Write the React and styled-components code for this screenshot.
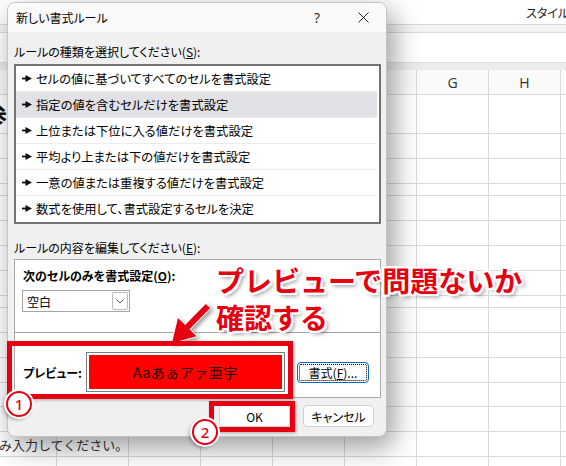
import React from "react";
import styled, { createGlobalStyle } from "styled-components";

const GlobalStyle = createGlobalStyle`
  html, body { margin: 0; padding: 0; background: #fff; }
  body { font-family: "Noto Sans CJK JP", "Noto Sans", sans-serif; }
`;

const Screen = styled.div`
  position: relative;
  width: 566px;
  height: 466px;
  overflow: hidden;
  background: #fff;
  font-family: "Noto Sans CJK JP", "Noto Sans", sans-serif;
  font-feature-settings: "palt";
  color: #000;
`;

/* ---------- spreadsheet behind ---------- */

const Sheet = styled.div`
  display: flex;
  flex-direction: column;
  width: 100%;
  height: 100%;
  & > * {
    flex-shrink: 0;
  }
`;

const Ribbon = styled.div`
  height: 24px;
  border-bottom: 1px solid #d8d8d8;
  display: flex;
  align-items: center;
  padding-left: 444px;
  font-size: 12px;
`;

const RibbonDivider = styled.div`
  width: 1px;
  height: 22px;
  background: #dcdcdc;
  margin-left: 4px;
  align-self: flex-start;
`;

const RibbonLabel = styled.span`
  margin-left: 78px;
  white-space: nowrap;
  color: #222;
`;

const RibbonFoot = styled.div`
  height: 7px;
  background: #f4f4f4;
  border-bottom: 1px solid #dadada;
`;

const FormulaBar = styled.div`
  height: 29px;
  background: #fff;
`;

const HeaderGap = styled.div`
  height: 8px;
  background: #ececec;
  border-top: 1px solid #dedede;
  box-sizing: border-box;
`;

const Row = styled.div`
  display: grid;
  grid-template-columns: 57px repeat(8, 72px);
  height: ${(p) => p.h}px;
  background: ${(p) => (p.header ? "#fafafa" : "#fff")};
`;

const Cell = styled.div`
  border-right: 1px solid #dadada;
  border-bottom: 1px solid #dadada;
  display: flex;
  align-items: center;
  justify-content: ${(p) => (p.center ? "center" : "flex-start")};
  font-family: "Open Sans", "Noto Sans", sans-serif;
  font-size: 14px;
  color: #333;
  white-space: nowrap;
  overflow: visible;
  min-width: 0;
`;

const SpillText = styled.span`
  margin-left: ${(p) => p.shift}px;
  font-family: "Noto Sans CJK JP", sans-serif;
  font-feature-settings: normal;
  font-size: ${(p) => p.size || 13}px;
  font-weight: ${(p) => (p.bold ? 700 : 400)};
  color: ${(p) => p.color || "#333"};
`;

/* ---------- dialog ---------- */

const Dialog = styled.div`
  position: absolute;
  left: 7px;
  top: 2px;
  width: 380px;
  height: 435px;
  box-sizing: border-box;
  border: 1px solid #c4c4c4;
  border-radius: 8px;
  overflow: hidden;
  display: flex;
  flex-direction: column;
  background: #f0f0f0;
  box-shadow: 6px 10px 28px rgba(0, 0, 0, 0.4);
  font-size: 12px;
`;

const TitleBar = styled.div`
  height: 29px;
  background: #fafafa;
  display: flex;
  align-items: center;
  padding-left: 8px;
`;

const Title = styled.span`
  flex: 1;
  font-size: 12px;
`;

const TitleButton = styled.div`
  width: 46px;
  height: 29px;
  display: flex;
  align-items: center;
  justify-content: center;
  font-family: "Open Sans", sans-serif;
  font-size: 14px;
  color: #222;
`;

const Body = styled.div`
  flex: 1;
  display: flex;
  flex-direction: column;
  padding: 12px 5px 0 6px;
`;

const Label = styled.div`
  font-size: 12px;
  line-height: 16px;
  height: 16px;
  margin-top: ${(p) => p.mt || 0}px;
  margin-bottom: ${(p) => p.mb || 0}px;
  font-weight: ${(p) => (p.bold ? 700 : 400)};
  white-space: nowrap;
`;

const Key = styled.span`
  text-decoration: underline;
`;

const ListBox = styled.div`
  height: 160px;
  box-sizing: border-box;
  border: 2px solid #737373;
  background: #fff;
  display: flex;
  flex-direction: column;
`;

const ListItem = styled.div`
  height: 26px;
  flex-shrink: 0;
  box-sizing: border-box;
  display: flex;
  align-items: center;
  padding-left: 6px;
  margin-right: 2px;
  font-size: 12.3px;
  background: ${(p) => (p.selected ? "#e1e1e6" : "#fff")};
  border-bottom: 1px solid ${(p) => (p.last ? "transparent" : "#ececec")};
  white-space: nowrap;
`;

const Bullet = styled.svg`
  width: 10px;
  height: 7px;
  margin-right: 4px;
  flex-shrink: 0;
`;

const EditPanel = styled.div`
  height: 139px;
  box-sizing: border-box;
  border: 1px solid #a9a9a9;
  background: #fff;
  display: flex;
  flex-direction: column;
`;

const PanelTop = styled.div`
  height: 72px;
  box-sizing: border-box;
  padding: 8px 8px 0;
`;

const Combo = styled.div`
  width: 108px;
  height: 22px;
  box-sizing: border-box;
  border: 1px solid #a5a5a5;
  margin-top: 6px;
  margin-left: -1px;
  display: flex;
  align-items: center;
  padding: 0 1px 0 4px;
  font-size: 12px;
`;

const ComboText = styled.span`
  flex: 1;
`;

const ComboButton = styled.div`
  width: 16px;
  height: 18px;
  box-sizing: border-box;
  border: 1px solid #bdbdbd;
  border-radius: 2px;
  display: flex;
  align-items: center;
  justify-content: center;
`;

const Divider = styled.div`
  height: 1px;
  background: #a3a3a3;
`;

const PreviewRow = styled.div`
  height: 40px;
  margin-top: 19px;
  display: flex;
  align-items: center;
  padding-left: 8px;
`;

const PreviewLabel = styled.span`
  width: 63px;
  font-size: 12px;
  font-weight: 700;
`;

const PreviewBox = styled.div`
  width: 199px;
  height: 40px;
  box-sizing: border-box;
  border: 1px solid #7c7c7c;
  padding: 2px;
  background: #fff;
`;

const PreviewFill = styled.div`
  width: 100%;
  height: 100%;
  background: #ff0000;
  display: flex;
  align-items: center;
  justify-content: center;
  font-size: 14px;
  letter-spacing: 0.5px;
  font-feature-settings: normal;
  color: #2a0000;
`;

const Button = styled.div`
  width: ${(p) => p.w}px;
  height: ${(p) => p.h || 22}px;
  margin-left: ${(p) => p.ml || 0}px;
  box-sizing: border-box;
  background: #fdfdfd;
  border: 1px solid ${(p) => (p.focused ? "#0a67c2" : "#d2d2d2")};
  border-radius: 4px;
  display: flex;
  align-items: center;
  justify-content: center;
  font-size: 12px;
  outline: ${(p) => (p.focused ? "1px dotted #000" : "none")};
  outline-offset: -3px;
`;

const ButtonRow = styled.div`
  display: flex;
  justify-content: flex-end;
  gap: 13px;
  margin-top: 7px;
  padding-right: 7px;
`;

/* ---------- annotations ---------- */

const Callout = styled.div`
  position: absolute;
  left: 216px;
  top: 262px;
  font-size: 28px;
  line-height: 37px;
  font-weight: 700;
  font-feature-settings: normal;
  color: #e60012;
  white-space: nowrap;
  text-shadow: 2px 0 0 #fff, -2px 0 0 #fff, 0 2px 0 #fff, 0 -2px 0 #fff,
    2px 2px 0 #fff, -2px 2px 0 #fff, 2px -2px 0 #fff, -2px -2px 0 #fff,
    3px 3px 4px rgba(0, 0, 0, 0.45);
`;

const RedFrame = styled.div`
  position: absolute;
  left: ${(p) => p.x}px;
  top: ${(p) => p.y}px;
  width: ${(p) => p.w}px;
  height: ${(p) => p.h}px;
  box-sizing: border-box;
  border: 5px solid #e60012;
  box-shadow: 1px 1px 3px rgba(0, 0, 0, 0.3);
`;

const Badge = styled.div`
  position: absolute;
  left: ${(p) => p.x}px;
  top: ${(p) => p.y}px;
  width: 26px;
  height: 26px;
  box-sizing: border-box;
  border-radius: 50%;
  background: #fff;
  border: 2px solid #e60012;
  box-shadow: 0 0 0 2px #fff, -2px 2px 4px rgba(0, 0, 0, 0.45);
  display: flex;
  align-items: center;
  justify-content: center;
  font-family: "Noto Sans", sans-serif;
  font-size: 15px;
  font-weight: 500;
  color: #e60012;
`;

const ArrowSvg = styled.svg`
  position: absolute;
  left: 160px;
  top: 296px;
  width: 60px;
  height: 60px;
  overflow: visible;
  filter: drop-shadow(2px 2px 2px rgba(0, 0, 0, 0.4));
`;

const items = [
  "セルの値に基づいてすべてのセルを書式設定",
  "指定の値を含むセルだけを書式設定",
  "上位または下位に入る値だけを書式設定",
  "平均より上または下の値だけを書式設定",
  "一意の値または重複する値だけを書式設定",
  "数式を使用して、書式設定するセルを決定",
];

const rowHeights = [39, 25, 25, 12, 25, 25, 25, 25, 12, 25, 25, 25, 24, 25, 25, 25];
const cols = ["A", "B", "C", "D", "E", "F", "G", "H", "I"];

export default function App() {
  return (
    <Screen>
      <GlobalStyle />
      <Sheet>
        <Ribbon>
          <svg width="8" height="8" viewBox="0 0 8 8">
            <path d="M0.5 6 V0.5 H6" fill="none" stroke="#a0a0a0" strokeWidth="1" />
            <path d="M2.5 2.5 L7 7 M7 3.5 V7 H3.5" fill="none" stroke="#a0a0a0" strokeWidth="1" />
          </svg>
          <RibbonDivider />
          <RibbonLabel>スタイル</RibbonLabel>
        </Ribbon>
        <RibbonFoot />
        <FormulaBar />
        <HeaderGap />
        <Row h={25} header>
          {cols.map((c) => (
            <Cell key={c} center>
              {c}
            </Cell>
          ))}
        </Row>
        {rowHeights.map((h, i) => (
          <Row key={i} h={h}>
            {cols.map((c) => (
              <Cell key={c}>
                {c === "A" && i === 0 && (
                  <SpillText shift={-17} size={24} bold color="#111">
                    参
                  </SpillText>
                )}
                {c === "A" && i === 14 && <SpillText shift={-1}>み入力してください。</SpillText>}
              </Cell>
            ))}
          </Row>
        ))}
      </Sheet>

      <Dialog>
        <TitleBar>
          <Title>新しい書式ルール</Title>
          <TitleButton>?</TitleButton>
          <TitleButton>
            <svg width="11" height="11" viewBox="0 0 11 11">
              <path d="M0.5 0.5 L10.5 10.5 M10.5 0.5 L0.5 10.5" stroke="#222" strokeWidth="1" />
            </svg>
          </TitleButton>
        </TitleBar>
        <Body>
          <Label mb={4}>
            ルールの種類を選択してください(<Key>S</Key>):
          </Label>
          <ListBox>
            {items.map((t, i) => (
              <ListItem key={t} selected={i === 1} last={i === items.length - 1}>
                <Bullet viewBox="0 0 10 7">
                  <rect x="0" y="2.6" width="5" height="1.8" fill="#111" />
                  <path d="M3.5 0 L10 3.5 L3.5 7 Z" fill="#111" />
                </Bullet>
                {t}
              </ListItem>
            ))}
          </ListBox>
          <Label mt={16} mb={3}>
            ルールの内容を編集してください(<Key>E</Key>):
          </Label>
          <EditPanel>
            <PanelTop>
              <Label bold>
                次のセルのみを書式設定(<Key>O</Key>):
              </Label>
              <Combo>
                <ComboText>空白</ComboText>
                <ComboButton>
                  <svg width="8" height="5" viewBox="0 0 8 5">
                    <path d="M0.5 0.5 L4 4 L7.5 0.5" fill="none" stroke="#555" strokeWidth="1" />
                  </svg>
                </ComboButton>
              </Combo>
            </PanelTop>
            <Divider />
            <PreviewRow>
              <PreviewLabel>プレビュー:</PreviewLabel>
              <PreviewBox>
                <PreviewFill>Aaあぁアァ亜宇</PreviewFill>
              </PreviewBox>
              <Button w={72} h={21} ml={12} focused>
                書式(<Key>F</Key>)...
              </Button>
            </PreviewRow>
          </EditPanel>
          <ButtonRow>
            <Button w={71}>OK</Button>
            <Button w={71}>キャンセル</Button>
          </ButtonRow>
        </Body>
      </Dialog>

      <Callout>
        プレビューで問題ないか
        <br />
        確認する
      </Callout>
      <ArrowSvg viewBox="0 0 60 60">
        <polygon
          points="12,47 36.6,40.3 29.5,33.3 50.2,12.1 45.8,7.9 25.1,29.1 18,22.1"
          fill="#e60012"
          stroke="#fff"
          strokeWidth="2"
          strokeLinejoin="round"
          paintOrder="stroke"
        />
      </ArrowSvg>
      <RedFrame x={7} y={341} w={286} h={58} />
      <RedFrame x={209} y={401} w={86} h={31} />
      <Badge x={6} y={391}>1</Badge>
      <Badge x={192} y={419}>2</Badge>
    </Screen>
  );
}
